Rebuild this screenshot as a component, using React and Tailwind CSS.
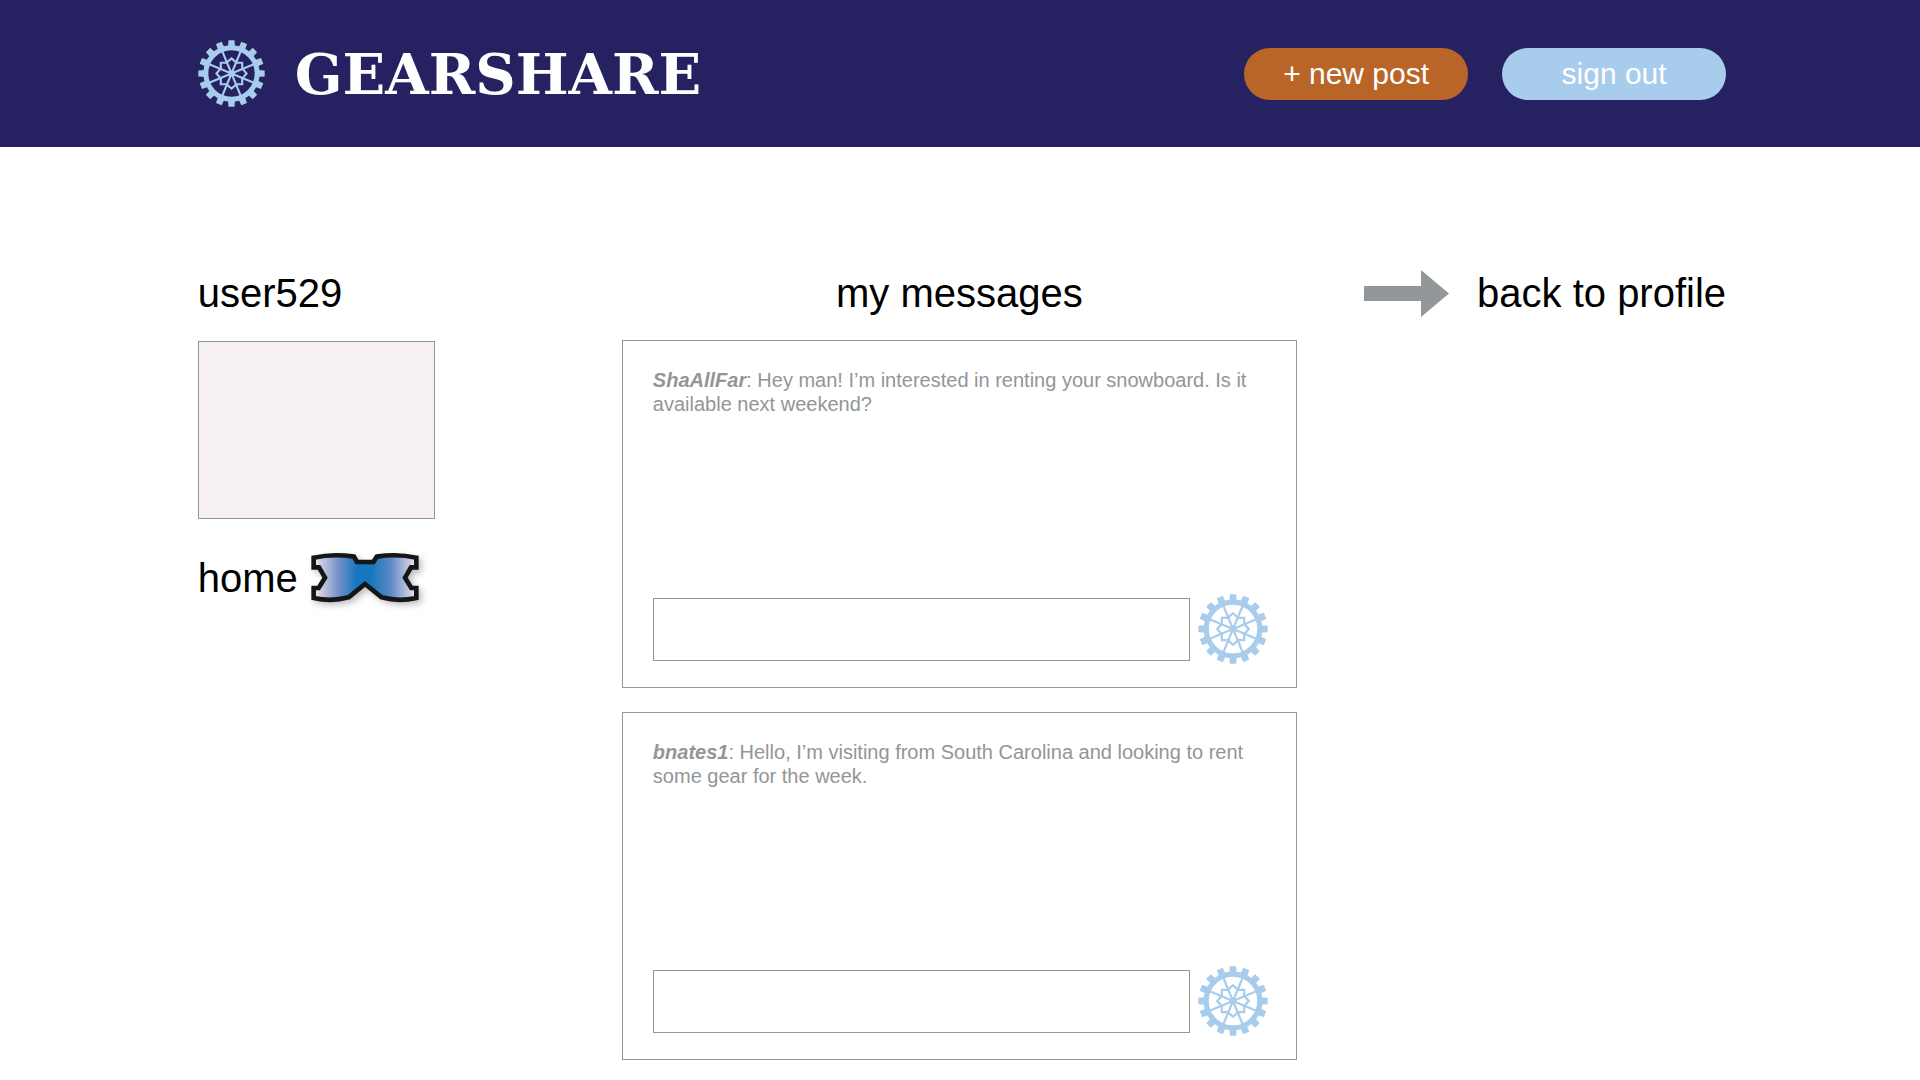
import React from "react";

const TEETH = Array.from({ length: 16 }, (_, i) => i * 22.5);
const SPOKES = [22.5, 67.5, 112.5, 157.5];

function Gear({ className }) {
  return (
    <svg viewBox="0 0 100 100" className={className} aria-hidden="true">
      <g transform="translate(50 50)">
        {TEETH.map((angle) => (
          <path
            key={angle}
            d="M-5.2 -38 L-4.6 -49.5 H4.6 L5.2 -38 Z"
            fill="currentColor"
            transform={`rotate(${angle})`}
          />
        ))}
        <circle r="38.3" fill="none" stroke="currentColor" strokeWidth="7.4" />
        {SPOKES.map((angle) => (
          <path
            key={angle}
            d="M0 -37 V37"
            stroke="currentColor"
            strokeWidth="3.2"
            transform={`rotate(${angle})`}
          />
        ))}
        <path
          d="M0 -22.5 L7.5 -16 H16 V-7.5 L22.5 0 L16 7.5 V16 H7.5 L0 22.5 L-7.5 16 H-16 V7.5 L-22.5 0 L-16 -7.5 V-16 H-7.5 Z"
          fill="none"
          stroke="currentColor"
          strokeWidth="3.2"
        />
        <circle r="5" fill="currentColor" />
      </g>
    </svg>
  );
}

function Goggles({ className }) {
  return (
    <svg viewBox="360 38 330 156" className={className} aria-hidden="true">
      <defs>
        <linearGradient id="lens" x1="0" x2="1" y1="0" y2="0">
          <stop offset="0" stopColor="#f1eef2" />
          <stop offset="0.09" stopColor="#c3c5de" />
          <stop offset="0.25" stopColor="#6f8fc8" />
          <stop offset="0.42" stopColor="#1577bd" />
          <stop offset="0.56" stopColor="#1577bd" />
          <stop offset="0.75" stopColor="#5d87c5" />
          <stop offset="0.92" stopColor="#c3c5de" />
          <stop offset="1" stopColor="#f1eef2" />
        </linearGradient>
      </defs>
      <path
        d="M371 55 Q430 42 492 52 L501 68 H550 L560 52 Q620 42 679 55 V84 H663 L645 115 L664 146 H679 V176 Q625 188 575 174 L525 134 L476 174 Q425 188 371 176 V146 H386 L405 115 L387 84 H371 Z"
        fill="url(#lens)"
        stroke="#151617"
        strokeWidth="14"
      />
    </svg>
  );
}

function MessageCard({ id, author, text }) {
  return (
    <article className="flex min-h-[348px] flex-col justify-between border border-[#939598] pt-[27px] pr-7 pb-[23px] pl-[30px]">
      <p className="text-xl leading-6 text-[#939598]">
        <strong className="font-bold italic">{author}</strong>
        {`: ${text}`}
      </p>
      <form className="flex items-center gap-2" onSubmit={(e) => e.preventDefault()}>
        <input
          id={id}
          type="text"
          aria-label={`Reply to ${author}`}
          className="h-[63px] min-w-0 flex-1 border border-[#939598] bg-white px-4 text-xl outline-none"
        />
        <button type="submit" aria-label="Send" className="shrink-0 text-[#a7ccec]">
          <Gear className="size-[70px]" />
        </button>
      </form>
    </article>
  );
}

const MESSAGES = [
  {
    id: "reply-1",
    author: "ShaAllFar",
    text: "Hey man! I’m interested in renting your snowboard. Is it available next weekend?",
  },
  {
    id: "reply-2",
    author: "bnates1",
    text: "Hello, I’m visiting from South Carolina and looking to rent some gear for the week.",
  },
];

export default function App() {
  return (
    <div className="min-h-screen bg-white font-['Liberation_Sans',Arial,sans-serif] text-black">
      <header className="flex min-h-[147px] items-center justify-between bg-[#262261] pr-[10.1%] pl-[10.3%]">
        <a href="#" className="flex items-center gap-[30px] text-white">
          <Gear className="size-[67px] text-[#a7ccec]" />
          <span className="font-['DejaVu_Serif',serif] text-[56px] leading-none font-bold">
            GEARSHARE
          </span>
        </a>
        <div className="flex gap-[34px] text-3xl text-white">
          <button type="button" className="h-[52px] w-56 rounded-full bg-[#b96528]">
            + new post
          </button>
          <button type="button" className="h-[52px] w-56 rounded-full bg-[#a7ccec]">
            sign out
          </button>
        </div>
      </header>

      <main className="grid grid-cols-[424fr_675fr_429fr] pt-[122px] pr-[10.1%] pb-5 pl-[10.3%]">
        <section>
          <h2 className="text-[40px] leading-[48px]">user529</h2>
          <div className="mt-6 h-[178px] w-[237px] border border-[#939598] bg-[#f7f1f1]" />
          <a href="#" className="mt-[33px] flex items-center gap-3 text-[40px] leading-[48px]">
            home
            <Goggles className="w-[110px] drop-shadow-[3px_3px_3px_rgba(0,0,0,0.25)]" />
          </a>
        </section>

        <section>
          <h1 className="text-center text-[40px] leading-[48px]">my messages</h1>
          <div className="mt-[23px] flex flex-col gap-6">
            {MESSAGES.map((message) => (
              <MessageCard key={message.id} {...message} />
            ))}
          </div>
        </section>

        <nav className="flex items-start justify-end">
          <a
            href="#"
            className="flex items-center gap-7 text-[40px] leading-[48px] whitespace-nowrap"
          >
            <svg viewBox="0 0 85 47" className="w-[85px] text-[#939799]" aria-hidden="true">
              <path d="M0 16 H57 V0 L85 23.5 L57 47 V31 H0 Z" fill="currentColor" />
            </svg>
            back to profile
          </a>
        </nav>
      </main>
    </div>
  );
}
